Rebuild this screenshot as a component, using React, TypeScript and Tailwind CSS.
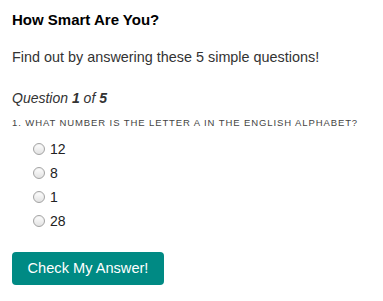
import { useState } from "react";

const options = ["12", "8", "1", "28"];

function Radio({ checked }: { checked: boolean }) {
  return (
    <span className="flex h-[12px] w-[12px] items-center justify-center rounded-full border border-[#a3a3a3] bg-gradient-to-b from-[#ffffff] to-[#e2e2e2] shadow-[inset_0_1px_1px_rgba(0,0,0,0.06)]">
      {checked && <span className="h-[5px] w-[5px] rounded-full bg-[#333]" />}
    </span>
  );
}

export default function App() {
  const [picked, setPicked] = useState<number | null>(null);

  return (
    <div className="min-h-[301px] w-[383px] bg-white px-3 pt-[11px] font-['Liberation_Sans',Arial,sans-serif] text-[#333]">
      {/* title */}
      <h1 className="text-[15px] font-bold leading-[18px] text-black">
        How Smart Are You?
      </h1>

      <p className="mt-[18px] text-[14.4px] leading-[20px] text-[#333]">
        Find out by answering these 5 simple questions!
      </p>

      {/* question */}
      <div className="mt-[21px] text-[14px] italic leading-[20px] text-[#333]">
        Question <b>1</b> of <b>5</b>
      </div>

      <div className="mt-[9px] text-[9.5px] uppercase leading-[12px] tracking-[0.9px] text-[#444]">
        1. What number is the letter A in the English alphabet?
      </div>

      <ul className="mt-[8px] pl-[21px]">
        {options.map((o, i) => (
          <li
            key={o}
            className="flex h-[24px] cursor-pointer items-center gap-[5px] text-[14px] text-[#222]"
            onClick={() => setPicked(i)}
          >
            <Radio checked={picked === i} />
            <span className="leading-[24px]">{o}</span>
          </li>
        ))}
      </ul>

      <button className="mt-[19px] flex h-[33px] w-[152px] items-center justify-center rounded-[4px] bg-[#008a84] text-[14.6px] text-white">
        Check My Answer!
      </button>
    </div>
  );
}
